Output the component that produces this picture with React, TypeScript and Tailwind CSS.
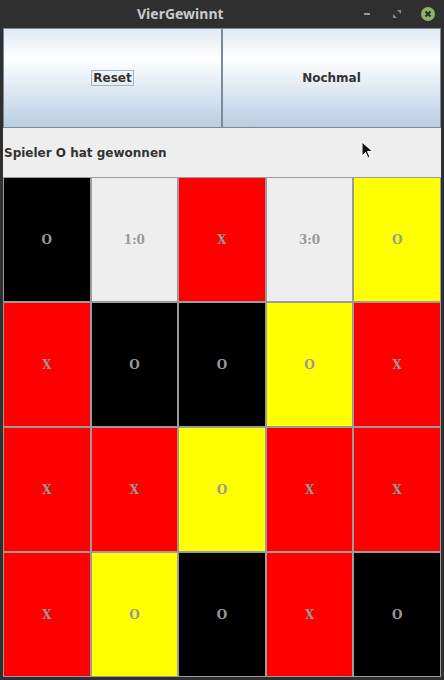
const cells: { bg: string; t: string }[][] = [
  [
    { bg: 'bg-black', t: 'O' },
    { bg: 'bg-[#eeeeee]', t: '1:0' },
    { bg: 'bg-[#ff0000]', t: 'X' },
    { bg: 'bg-[#eeeeee]', t: '3:0' },
    { bg: 'bg-[#ffff00]', t: 'O' },
  ],
  [
    { bg: 'bg-[#ff0000]', t: 'X' },
    { bg: 'bg-black', t: 'O' },
    { bg: 'bg-black', t: 'O' },
    { bg: 'bg-[#ffff00]', t: 'O' },
    { bg: 'bg-[#ff0000]', t: 'X' },
  ],
  [
    { bg: 'bg-[#ff0000]', t: 'X' },
    { bg: 'bg-[#ff0000]', t: 'X' },
    { bg: 'bg-[#ffff00]', t: 'O' },
    { bg: 'bg-[#ff0000]', t: 'X' },
    { bg: 'bg-[#ff0000]', t: 'X' },
  ],
  [
    { bg: 'bg-[#ff0000]', t: 'X' },
    { bg: 'bg-[#ffff00]', t: 'O' },
    { bg: 'bg-black', t: 'O' },
    { bg: 'bg-[#ff0000]', t: 'X' },
    { bg: 'bg-black', t: 'O' },
  ],
];

export default function App() {
  return (
    <div className="w-[444px] h-[680px] bg-[#2f2f2f] flex flex-col relative overflow-hidden">
      {/* Title bar */}
      <div className="h-[28px] flex items-center relative">
        <div className="pl-[137px] text-[14px] font-bold text-[#c9c9c9] font-['Noto_Sans',sans-serif] -mt-[1px]">
          VierGewinnt
        </div>
        <div className="absolute right-[8px] top-[6px] flex items-center gap-[16px]">
          <svg width="14" height="14" viewBox="0 0 14 14">
            <rect x="4" y="6" width="6" height="2" fill="#9a9a9a" />
          </svg>
          <svg width="14" height="14" viewBox="0 0 14 14">
            <polygon points="7,3 11,3 11,7" fill="#8a8a8a" />
            <polygon points="3,7 3,11 7,11" fill="#8a8a8a" />
          </svg>
          <svg width="16" height="16" viewBox="0 0 16 16">
            <circle cx="8" cy="8" r="7" fill="#8cb26a" />
            <path d="M5.5 5.5 L10.5 10.5 M10.5 5.5 L5.5 10.5" stroke="#2f2f2f" strokeWidth="2" />
          </svg>
        </div>
      </div>

      {/* Content */}
      <div className="flex-1 mx-[3px] mb-[3px] bg-[#eeeeee] flex flex-col font-['DejaVu_Sans',sans-serif]">
        <div className="h-[100px] flex">
          <button className="flex-1 border border-[#7a8a99] bg-gradient-to-b from-[#e1e9f4] via-white via-30% to-[#b9cee4] flex items-center justify-center">
            <span className="border border-[#9fb4cb] px-[1px] text-[12px] font-bold text-[#333333] leading-[14px]">Reset</span>
          </button>
          <button className="flex-1 border border-[#7a8a99] bg-gradient-to-b from-[#e1e9f4] via-white via-30% to-[#b9cee4] flex items-center justify-center">
            <span className="text-[12px] font-bold text-[#333333] leading-[14px]">Nochmal</span>
          </button>
        </div>

        <div className="h-[49px] flex items-center pl-[1px] text-[12px] font-bold text-[#333333]">
          Spieler O hat gewonnen
        </div>

        <div className="flex-1 grid grid-cols-5 grid-rows-4">
          {cells.flat().map((c, i) => (
            <div
              key={i}
              className={`${c.bg} border border-[#9b9b9b] flex items-center justify-center text-[12px] font-bold text-[#999999] font-['DejaVu_Serif',serif]`}
            >
              {c.t}
            </div>
          ))}
        </div>
      </div>

      {/* Mouse cursor */}
      <svg className="absolute left-[361px] top-[141px]" width="14" height="20" viewBox="0 0 14 20">
        <path d="M1 1 L1 15 L4.5 11.5 L7 17 L9 16 L6.5 10.5 L11.5 10.5 Z" fill="#111" stroke="#fff" strokeWidth="1" />
      </svg>
    </div>
  );
}
